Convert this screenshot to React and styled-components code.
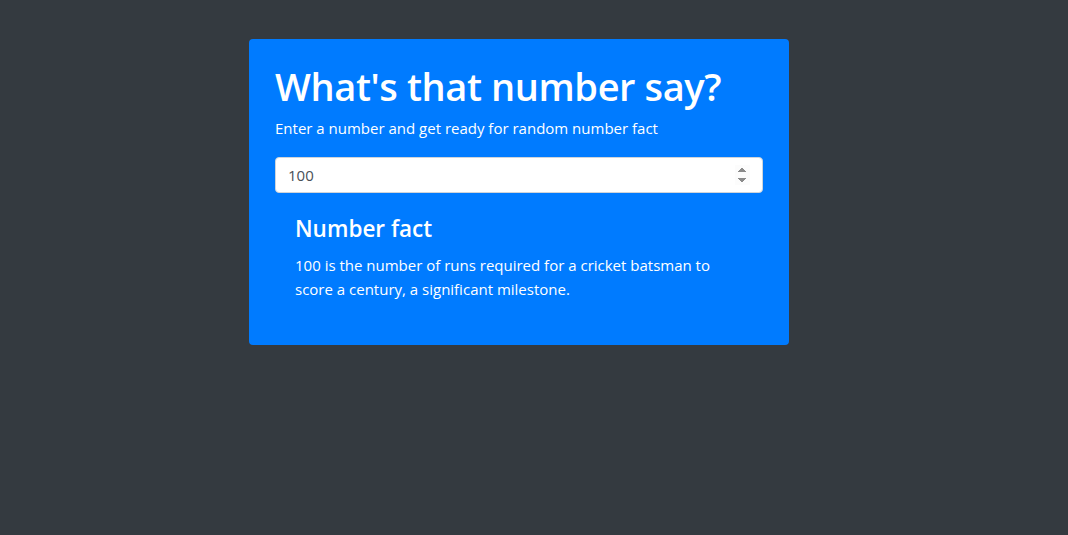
import React from "react";
import styled, { createGlobalStyle } from "styled-components";

const GlobalStyle = createGlobalStyle`
  html, body {
    margin: 0;
    background: #343a40;
    font-family: "Open Sans", "Noto Sans", sans-serif;
    color: #fff;
  }
`;

const Page = styled.div`
  min-height: 535px;
  padding: 39px 0 0 249px;
  box-sizing: border-box;
`;

const Card = styled.div`
  width: 540px;
  box-sizing: border-box;
  background: #007bff;
  border-radius: 4px;
  padding: 23px 26px 44px;
`;

const Title = styled.h1`
  margin: 0 0 6px;
  font-size: 38px;
  font-weight: 600;
  line-height: 48px;
  letter-spacing: -0.4px;
`;

const Lead = styled.p`
  margin: 0 0 17px;
  font-size: 15px;
  line-height: 24px;
`;

const NumberInput = styled.input`
  display: block;
  width: 100%;
  height: 36px;
  box-sizing: border-box;
  padding: 6px 12px;
  border: 1px solid #ced4da;
  border-radius: 4px;
  background: #fff;
  color: #495057;
  font-family: inherit;
  font-size: 15px;
  outline: none;
`;

const Fact = styled.div`
  padding: 21px 20px 0;
`;

const FactTitle = styled.h4`
  margin: 0 0 9px;
  font-size: 22.5px;
  font-weight: 600;
  line-height: 30px;
`;

const FactText = styled.p`
  margin: 0;
  font-size: 15px;
  line-height: 24px;
  max-width: 440px;
`;

export default function App() {
  return (
    <>
      <GlobalStyle />
      <Page>
        <Card>
          <Title>What's that number say?</Title>
          <Lead>Enter a number and get ready for random number fact</Lead>
          <NumberInput type="number" defaultValue="100" autoFocus />
          <Fact>
            <FactTitle>Number fact</FactTitle>
            <FactText>
              100 is the number of runs required for a cricket batsman to score
              a century, a significant milestone.
            </FactText>
          </Fact>
        </Card>
      </Page>
    </>
  );
}
